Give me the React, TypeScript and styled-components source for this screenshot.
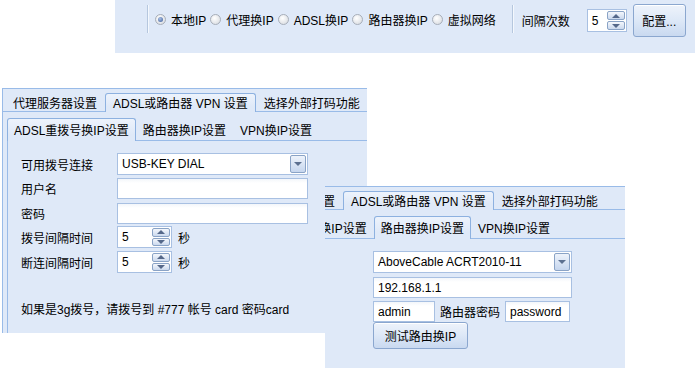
import styled, { createGlobalStyle, css } from "styled-components";

const BLUE = "#dfe9f8";
const LINE = "#99bbe8";

const GlobalStyle = createGlobalStyle`
  html, body {
    margin: 0;
    padding: 0;
    background: #fff;
  }
  body {
    font-family: "Liberation Sans", "Noto Sans CJK SC", sans-serif;
    font-size: 12px;
    color: #000;
  }
  #root {
    position: relative;
    width: 695px;
    height: 368px;
    overflow: hidden;
  }
`;

/* ---------- top toolbar ---------- */

const Toolbar = styled.div`
  position: absolute;
  left: 115px;
  top: 0;
  width: 580px;
  height: 53px;
  box-sizing: border-box;
  padding: 4px 0 16px 32px;
  background: ${BLUE};
  display: flex;
  align-items: center;
`;

const Separator = styled.span<{ $ml?: number; $mr?: number }>`
  width: 0;
  height: 28px;
  border-left: 1px solid #b6c7de;
  border-right: 1px solid #f4f8fd;
  margin: 0 ${(p) => p.$mr ?? 6}px 0 ${(p) => p.$ml ?? 0}px;
  position: relative;
  top: -2px;
`;

const RadioOption = styled.label`
  display: flex;
  align-items: center;
  gap: 5px;
  margin-right: 4px;
  white-space: nowrap;
  position: relative;
  top: -1px;
`;

const RadioDot = styled.span<{ $on?: boolean }>`
  width: 11px;
  height: 11px;
  box-sizing: border-box;
  border-radius: 50%;
  border: 1px solid #a7aeb9;
  background: radial-gradient(circle at 40% 35%, #ffffff, #d3d7dd);
  display: inline-flex;
  align-items: center;
  justify-content: center;
  ${(p) =>
    p.$on &&
    css`
      &::after {
        content: "";
        width: 5px;
        height: 5px;
        border-radius: 50%;
        background: radial-gradient(circle at 40% 35%, #a9c0e6, #3b5c99);
      }
    `}
`;

const BarLabel = styled.span`
  white-space: nowrap;
`;

const BarSlot = styled.span<{ $ml: number }>`
  margin-left: ${(p) => p.$ml}px;
  display: flex;
`;

const PushButton = styled.button<{ $w: number; $h: number }>`
  width: ${(p) => p.$w}px;
  height: ${(p) => p.$h}px;
  padding: 0;
  box-sizing: border-box;
  border: 1px solid #8ba7cf;
  border-radius: 3px;
  background: linear-gradient(#eef3fb, #dde8f7 50%, #c9d9f0);
  box-shadow: inset 0 1px 0 #fff;
  font: inherit;
  color: #000;
  white-space: nowrap;
`;

/* ---------- spin box ---------- */

const SpinBox = styled.div<{ $w: number; $h: number }>`
  width: ${(p) => p.$w}px;
  height: ${(p) => p.$h}px;
  box-sizing: border-box;
  border: 1px solid #a8c0e2;
  background: #fff;
  display: flex;
  align-items: stretch;
  padding: 1px;
`;

const SpinValue = styled.span`
  flex: 1;
  display: flex;
  align-items: center;
  padding-left: 3px;
`;

const SpinButtons = styled.span`
  width: 18px;
  display: flex;
  flex-direction: column;
  gap: 1px;
`;

const SpinArrow = styled.span<{ $down?: boolean }>`
  flex: 1;
  box-sizing: border-box;
  border: 1px solid #8aa3c6;
  border-radius: 2px;
  background: linear-gradient(#f4f7fc, #cbd9ee);
  display: flex;
  align-items: center;
  justify-content: center;
  &::after {
    content: "";
    border-left: 4px solid transparent;
    border-right: 4px solid transparent;
    ${(p) =>
      p.$down
        ? css`border-top: 4px solid #55688a;`
        : css`border-bottom: 4px solid #55688a;`}
  }
`;

const Spin = ({ w, h, value }: { w: number; h: number; value: string }) => (
  <SpinBox $w={w} $h={h}>
    <SpinValue>{value}</SpinValue>
    <SpinButtons>
      <SpinArrow />
      <SpinArrow $down />
    </SpinButtons>
  </SpinBox>
);

/* ---------- inputs ---------- */

const TextBox = styled.div<{ $w: number; $h?: number }>`
  width: ${(p) => p.$w}px;
  height: ${(p) => p.$h ?? 21}px;
  box-sizing: border-box;
  border: 1px solid #a8c0e2;
  background: linear-gradient(#f3f6fa, #fff 4px);
  display: flex;
  align-items: center;
  padding-left: 4px;
  white-space: nowrap;
`;

const ComboBox = styled(TextBox)`
  padding: 1px 1px 1px 4px;
  background: #fff;
  justify-content: space-between;
  align-items: stretch;
`;

const ComboText = styled.span`
  display: flex;
  align-items: center;
`;

const ComboArrow = styled.span`
  width: 16px;
  box-sizing: border-box;
  border: 1px solid #8aa3c6;
  border-radius: 2px;
  background: linear-gradient(#eef3fb, #c6d6ee);
  display: flex;
  align-items: center;
  justify-content: center;
  &::after {
    content: "";
    border-left: 4px solid transparent;
    border-right: 4px solid transparent;
    border-top: 4px solid #5c7090;
  }
`;

const Combo = ({ w, text }: { w: number; text: string }) => (
  <ComboBox $w={w} $h={22}>
    <ComboText>{text}</ComboText>
    <ComboArrow />
  </ComboBox>
);

/* ---------- tab window ---------- */

const Crop = styled.div<{ $x: number; $y: number; $w: number; $h: number }>`
  position: absolute;
  left: ${(p) => p.$x}px;
  top: ${(p) => p.$y}px;
  width: ${(p) => p.$w}px;
  height: ${(p) => p.$h}px;
  overflow: hidden;
`;

const Win = styled.div<{ $shift: number }>`
  width: 392px;
  height: 270px;
  margin-left: -${(p) => p.$shift}px;
  box-sizing: border-box;
  border: 1px solid ${LINE};
  background: ${BLUE};
  display: flex;
  flex-direction: column;
`;

const TabStrip = styled.div`
  height: 22px;
  flex: none;
  display: flex;
  align-items: flex-end;
  padding-left: 2px;
  border-bottom: 1px solid ${LINE};
`;

const Tab = styled.div<{ $active?: boolean; $pad: number; $h: number }>`
  height: ${(p) => p.$h}px;
  margin-bottom: -1px;
  padding: 0 ${(p) => p.$pad}px 1px;
  box-sizing: border-box;
  display: flex;
  align-items: center;
  white-space: nowrap;
  border: 1px solid transparent;
  border-bottom: none;
  border-radius: 3px 3px 0 0;
  ${(p) =>
    p.$active &&
    css`
      border-color: #8db1e0;
      background: linear-gradient(#edf3fc, ${BLUE} 70%);
    `}
`;

const WinBody = styled.div`
  flex: 1;
  padding-left: 4px;
  display: flex;
  flex-direction: column;
`;

const SubStrip = styled(TabStrip)`
  height: 28px;
  padding-left: 0;
`;

const SubBody = styled.div`
  flex: 1;
  border-left: 1px solid ${LINE};
  padding: 12px 0 0 13px;
`;

const FormRow = styled.div<{ $h?: number; $gap?: number }>`
  display: flex;
  align-items: center;
  height: ${(p) => p.$h ?? 22}px;
  margin-bottom: ${(p) => p.$gap ?? 3}px;
  white-space: nowrap;
`;

const FieldLabel = styled.span`
  width: 96px;
  flex: none;
`;

const Unit = styled.span`
  margin-left: 6px;
`;

const Note = styled.div`
  margin-top: 27px;
  white-space: nowrap;
`;

const RouterForm = styled.div`
  margin-left: 114px;
  display: flex;
  flex-direction: column;
`;

const Inline = styled.span`
  margin: 0 5px;
`;

const topTabs = ["代理服务器设置", "ADSL或路由器 VPN 设置", "选择外部打码功能"];
const subTabs = ["ADSL重拨号换IP设置", "路由器换IP设置", "VPN换IP设置"];

const AdslForm = () => (
  <>
    <FormRow $gap={3}>
      <FieldLabel>可用拨号连接</FieldLabel>
      <Combo w={191} text="USB-KEY DIAL" />
    </FormRow>
    <FormRow $h={21} $gap={4}>
      <FieldLabel>用户名</FieldLabel>
      <TextBox $w={191} />
    </FormRow>
    <FormRow $h={21} $gap={2}>
      <FieldLabel>密码</FieldLabel>
      <TextBox $w={191} />
    </FormRow>
    <FormRow $gap={3}>
      <FieldLabel>拨号间隔时间</FieldLabel>
      <Spin w={55} h={22} value="5" />
      <Unit>秒</Unit>
    </FormRow>
    <FormRow $gap={0}>
      <FieldLabel>断连间隔时间</FieldLabel>
      <Spin w={55} h={22} value="5" />
      <Unit>秒</Unit>
    </FormRow>
    <Note>如果是3g拨号，请拨号到 #777 帐号 card 密码card</Note>
  </>
);

const RouterPane = () => (
  <RouterForm>
    <FormRow $gap={4}>
      <Combo w={199} text="AboveCable ACRT2010-11" />
    </FormRow>
    <FormRow $h={21} $gap={3}>
      <TextBox $w={199}>192.168.1.1</TextBox>
    </FormRow>
    <FormRow $h={21} $gap={0}>
      <TextBox $w={62}>admin</TextBox>
      <Inline>路由器密码</Inline>
      <TextBox $w={65}>password</TextBox>
    </FormRow>
    <div>
      <PushButton $w={95} $h={27}>测试路由换IP</PushButton>
    </div>
  </RouterForm>
);

const SettingsWindow = ({ shift, sub }: { shift: number; sub: number }) => (
  <Win $shift={shift}>
    <TabStrip>
      {topTabs.map((t, i) => (
        <Tab key={t} $active={i === 1} $pad={7} $h={19}>
          {t}
        </Tab>
      ))}
    </TabStrip>
    <WinBody>
      <SubStrip>
        {subTabs.map((t, i) => (
          <Tab key={t} $active={i === sub} $pad={6} $h={23}>
            {t}
          </Tab>
        ))}
      </SubStrip>
      <SubBody>{sub === 0 ? <AdslForm /> : <RouterPane />}</SubBody>
    </WinBody>
  </Win>
);

const modes = ["本地IP", "代理换IP", "ADSL换IP", "路由器换IP", "虚拟网络"];

export default function App() {
  return (
    <>
      <GlobalStyle />
      <Toolbar>
        <Separator />
        {modes.map((m, i) => (
          <RadioOption key={m}>
            <RadioDot $on={i === 0} />
            <BarLabel>{m}</BarLabel>
          </RadioOption>
        ))}
        <Separator $ml={12} $mr={8} />
        <BarLabel>间隔次数</BarLabel>
        <BarSlot $ml={17}>
          <Spin w={40} h={23} value="5" />
        </BarSlot>
        <BarSlot $ml={6}>
          <PushButton $w={53} $h={33}>配置...</PushButton>
        </BarSlot>
      </Toolbar>
      <Crop $x={2} $y={88} $w={365} $h={245}>
        <SettingsWindow shift={0} sub={0} />
      </Crop>
      <Crop $x={325} $y={186} $w={300} $h={182}>
        <SettingsWindow shift={85} sub={1} />
      </Crop>
    </>
  );
}
